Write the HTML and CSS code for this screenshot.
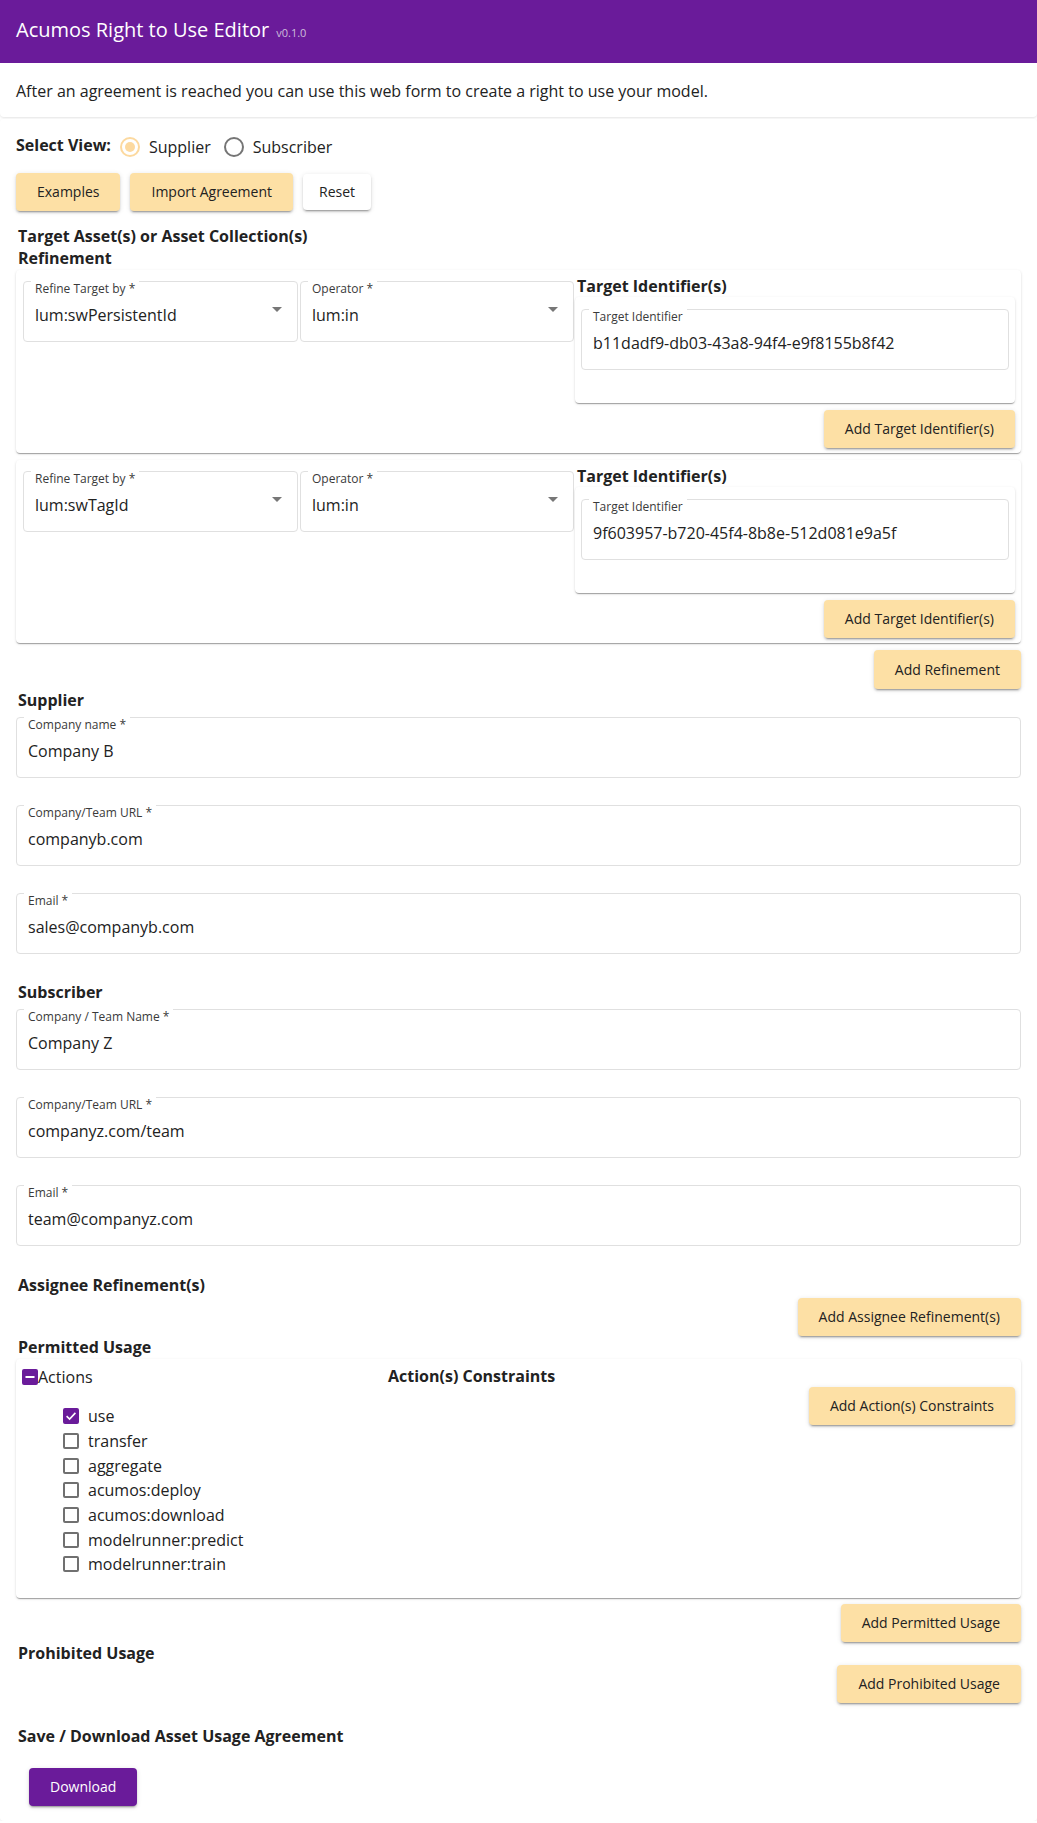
FILE: index.html
```html
<!DOCTYPE html>
<html lang="en">
<head>
<meta charset="utf-8">
<title>Acumos Right to Use Editor</title>
<link rel="stylesheet" href="styles.css">
</head>
<body>
<header class="appbar">
  <span class="app-title">Acumos Right to Use Editor</span><span class="app-version">v0.1.0</span>
</header>
<div class="paper intro">After an agreement is reached you can use this web form to create a right to use your model.</div>

<main class="paper main">
  <div class="view-row">
    <span class="view-title">Select View:</span>
    <span class="radio checked"></span><span class="radio-label">Supplier</span>
    <span class="radio second"></span><span class="radio-label">Subscriber</span>
  </div>

  <div class="btn-row top-buttons">
    <button class="btn">Examples</button>
    <button class="btn">Import Agreement</button>
    <button class="btn btn-white">Reset</button>
  </div>

  <h2 class="section-title first-title">Target Asset(s) or Asset Collection(s)<br>Refinement</h2>

  <section class="paper refine-card">
    <div class="field select-field">
      <div class="field-label">Refine Target by *</div>
      <div class="field-value"><span class="value-text">lum:swPersistentId</span><span class="arrow"></span></div>
    </div>
    <div class="field select-field">
      <div class="field-label">Operator *</div>
      <div class="field-value"><span class="value-text">lum:in</span><span class="arrow"></span></div>
    </div>
    <div class="target-col">
      <div class="sub-title">Target Identifier(s)</div>
      <div class="paper target-paper">
        <div class="field">
          <div class="field-label">Target Identifier</div>
          <div class="field-value">b11dadf9-db03-43a8-94f4-e9f8155b8f42</div>
        </div>
      </div>
      <div class="btn-row right inner-btn"><button class="btn">Add Target Identifier(s)</button></div>
    </div>
  </section>

  <section class="paper refine-card second-card">
    <div class="field select-field">
      <div class="field-label">Refine Target by *</div>
      <div class="field-value"><span class="value-text">lum:swTagId</span><span class="arrow"></span></div>
    </div>
    <div class="field select-field">
      <div class="field-label">Operator *</div>
      <div class="field-value"><span class="value-text">lum:in</span><span class="arrow"></span></div>
    </div>
    <div class="target-col">
      <div class="sub-title">Target Identifier(s)</div>
      <div class="paper target-paper">
        <div class="field">
          <div class="field-label">Target Identifier</div>
          <div class="field-value">9f603957-b720-45f4-8b8e-512d081e9a5f</div>
        </div>
      </div>
      <div class="btn-row right inner-btn"><button class="btn">Add Target Identifier(s)</button></div>
    </div>
  </section>

  <div class="btn-row right refine-btn"><button class="btn btn-tall">Add Refinement</button></div>

  <h2 class="section-title">Supplier</h2>
  <div class="fields">
    <div class="field">
      <div class="field-label">Company name *</div>
      <div class="field-value">Company B</div>
    </div>
    <div class="field">
      <div class="field-label">Company/Team URL *</div>
      <div class="field-value">companyb.com</div>
    </div>
    <div class="field">
      <div class="field-label">Email *</div>
      <div class="field-value">sales@companyb.com</div>
    </div>
  </div>

  <h2 class="section-title after-fields">Subscriber</h2>
  <div class="fields">
    <div class="field">
      <div class="field-label">Company / Team Name *</div>
      <div class="field-value">Company Z</div>
    </div>
    <div class="field">
      <div class="field-label">Company/Team URL *</div>
      <div class="field-value">companyz.com/team</div>
    </div>
    <div class="field">
      <div class="field-label">Email *</div>
      <div class="field-value">team@companyz.com</div>
    </div>
  </div>

  <h2 class="section-title assignee-title">Assignee Refinement(s)</h2>
  <div class="btn-row right assignee-btn"><button class="btn">Add Assignee Refinement(s)</button></div>

  <h2 class="section-title">Permitted Usage</h2>
  <section class="paper usage-card">
    <div class="usage-left">
      <div class="actions-head">
        <span class="cb indeterminate"><svg viewBox="0 0 16 16" width="16" height="16"><rect x="3.5" y="7" width="9" height="2" fill="#fff"/></svg></span><span>Actions</span>
      </div>
      <ul class="action-list">
        <li><span class="cb checked"><svg viewBox="0 0 16 16" width="16" height="16"><path d="M3.6 8.2 L6.6 11.1 L12.4 4.9" fill="none" stroke="#fff" stroke-width="1.6"/></svg></span>use</li>
        <li><span class="cb"></span>transfer</li>
        <li><span class="cb"></span>aggregate</li>
        <li><span class="cb"></span>acumos:deploy</li>
        <li><span class="cb"></span>acumos:download</li>
        <li><span class="cb"></span>modelrunner:predict</li>
        <li><span class="cb"></span>modelrunner:train</li>
      </ul>
    </div>
    <div class="usage-right">
      <div class="sub-title constraints-title">Action(s) Constraints</div>
      <div class="btn-row right"><button class="btn">Add Action(s) Constraints</button></div>
    </div>
  </section>
  <div class="btn-row right permitted-btn"><button class="btn">Add Permitted Usage</button></div>

  <h2 class="section-title">Prohibited Usage</h2>
  <div class="btn-row right prohibited-btn"><button class="btn">Add Prohibited Usage</button></div>

  <h2 class="section-title save-title">Save / Download Asset Usage Agreement</h2>
  <div class="btn-row download-row"><button class="btn btn-purple">Download</button></div>
</main>
</body>
</html>
```

FILE: styles.css
```css
* { box-sizing: border-box; }

html, body {
  margin: 0;
  padding: 0;
  background: #fff;
}

body {
  font-family: "Open Sans", "Noto Sans", "Liberation Sans", sans-serif;
  font-size: 16px;
  line-height: 24px;
  color: #222;
}

.appbar {
  height: 63px;
  background: #6a1b9a;
  padding: 16px 16px 0;
  color: #fff;
  position: relative;
  z-index: 2;
}

.app-title {
  font-size: 20px;
  line-height: 28px;
  font-weight: 400;
}

.app-version {
  font-size: 11px;
  margin-left: 7px;
  color: #cdbfdb;
}

.paper {
  background: #fff;
  border-radius: 4px;
  box-shadow: 0 2px 1px -1px rgba(0,0,0,.2), 0 1px 1px 0 rgba(0,0,0,.14), 0 1px 3px 0 rgba(0,0,0,.12);
}

.intro {
  padding: 16px 16px 14px;
  border-radius: 0 0 4px 4px;
  font-size: 16px;
  line-height: 24px;
  box-shadow: 0 1px 2px 0 rgba(0,0,0,.06), 0 1px 3px 0 rgba(0,0,0,.05);
}

.main {
  margin-top: 2px;
  padding: 7px 16px 15px;
  box-shadow: 0 1px 3px 0 rgba(0,0,0,.08);
}

/* Select view row */
.view-row {
  height: 42px;
  display: flex;
  align-items: center;
}

.view-title {
  font-weight: 700;
  line-height: 22px;
  margin-bottom: 5px;
}

.radio {
  width: 20px;
  height: 20px;
  border-radius: 50%;
  border: 2px solid #757575;
  margin-left: 9px;
  display: flex;
  align-items: center;
  justify-content: center;
  flex: none;
}

.radio.checked {
  border-color: #fcd99f;
}

.radio.checked::after {
  content: "";
  width: 10px;
  height: 10px;
  border-radius: 50%;
  background: #fcd99f;
}

.radio.second {
  margin-left: 13px;
}

.radio-label {
  margin-left: 9px;
  line-height: 24px;
}

/* Buttons */
.btn-row {
  display: flex;
  gap: 10px;
}

.btn-row.right {
  justify-content: flex-end;
}

.btn {
  font-family: "Open Sans", "Noto Sans", "Liberation Sans", sans-serif;
  font-size: 14px;
  line-height: 38px;
  height: 38px;
  padding: 0 21px;
  border: 0;
  border-radius: 4px;
  background: #fde0a5;
  color: #222;
  white-space: nowrap;
  box-shadow: 0 3px 1px -2px rgba(0,0,0,.2), 0 2px 2px 0 rgba(0,0,0,.14), 0 1px 5px 0 rgba(0,0,0,.12);
}

.btn-white {
  background: #fff;
  height: 36px;
  line-height: 36px;
  margin-top: 1px;
  padding: 0 16px;
}

.btn-tall {
  height: 39px;
  line-height: 39px;
}

.btn-purple {
  background: #6a1b9a;
  color: #fff;
}

.top-buttons {
  margin-top: 5px;
}

/* Headings */
.section-title {
  margin: 0;
  padding-left: 2px;
  font-size: 16px;
  line-height: 22px;
  font-weight: 700;
  color: #222;
}

.first-title {
  margin-top: 14px;
}

.sub-title {
  font-size: 16px;
  line-height: 22px;
  font-weight: 700;
  padding-left: 2px;
}

/* Fields */
.field {
  border: 1px solid #e0e0e0;
  border-radius: 4px;
  padding: 0 11px 14px;
  background: #fff;
}

.field-label {
  display: block;
  width: fit-content;
  margin: -1px 0 0 -4px;
  padding: 0 4px;
  background: #fff;
  font-size: 12px;
  line-height: 16px;
  color: #3a3a3a;
}

.field-value {
  display: flex;
  margin-top: 6px;
  font-size: 16px;
  line-height: 24px;
  color: #222;
  white-space: nowrap;
}

.value-text {
  flex: 1;
}

.arrow {
  width: 0;
  height: 0;
  border-left: 5px solid transparent;
  border-right: 5px solid transparent;
  border-top: 5px solid #777;
  margin: 4px 4px 0 0;
}

.fields {
  display: flex;
  flex-direction: column;
  gap: 27px;
  margin-top: 6px;
}

/* Refinement cards */
.refine-card {
  margin-top: 1px;
  display: grid;
  grid-template-columns: 275px 274px 1fr;
  column-gap: 2px;
  padding: 5px 6px 5px 7px;
  align-items: start;
}

.second-card {
  margin-top: 7px;
}

.select-field {
  margin-top: 6px;
}

.target-col {
  margin-left: -1px;
}

.target-paper {
  padding: 12px 6px 33px;
}

.inner-btn {
  margin-top: 7px;
}

.refine-btn {
  margin-top: 7px;
}

.after-fields {
  margin-top: 27px;
}

.assignee-title {
  margin-top: 28px;
}

.assignee-btn {
  margin-top: 2px;
}

/* Usage card */
.usage-card {
  margin-top: 1px;
  display: grid;
  grid-template-columns: 366px 1fr;
  padding: 6px 6px 21px;
  align-items: start;
}

.actions-head {
  display: flex;
  align-items: center;
  height: 24px;
}

.cb {
  width: 16px;
  height: 16px;
  border: 2px solid #707070;
  border-radius: 2px;
  display: inline-block;
  flex: none;
}

.cb svg {
  display: block;
  margin: -2px;
}

.cb.checked,
.cb.indeterminate {
  background: #6a1b9a;
  border-color: #6a1b9a;
}

.action-list {
  list-style: none;
  margin: 15px 0 0;
  padding: 0 0 0 41px;
}

.action-list li {
  height: 24.67px;
  display: flex;
  align-items: center;
}

.action-list .cb {
  margin-right: 9px;
}

.constraints-title {
  padding-left: 0;
}

.permitted-btn {
  margin-top: 6px;
}

.prohibited-btn {
  margin-top: 1px;
}

.save-title {
  margin-top: 22px;
}

.download-row {
  margin-top: 21px;
  padding-left: 13px;
}
```
